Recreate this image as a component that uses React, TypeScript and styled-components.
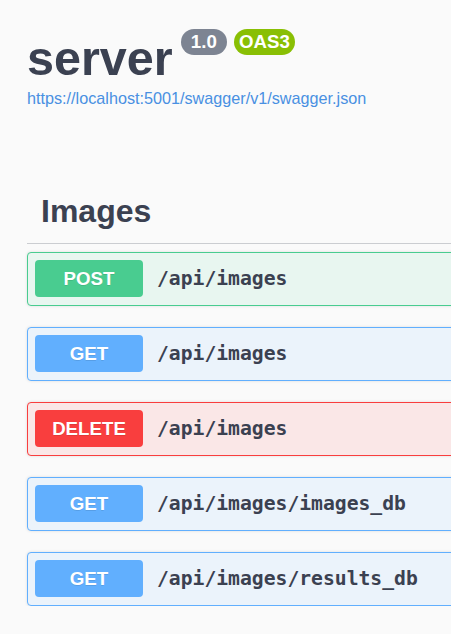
import React from 'react';
import styled, { createGlobalStyle } from 'styled-components';

const GlobalStyle = createGlobalStyle`
  html, body {
    margin: 0;
    padding: 0;
    background: #fafafa;
    overflow: hidden;
  }
  body {
    font-family: 'Liberation Sans', Arial, sans-serif;
    color: #3b4151;
  }
`;

const Viewport = styled.div`
  width: 100vw;
  overflow: hidden;
`;

const Page = styled.div`
  width: 520px;
  padding: 0 0 0 27px;
`;

const Info = styled.div`
  padding-top: 22px;
`;

const TitleRow = styled.div`
  display: flex;
  align-items: flex-start;
  gap: 7px;
`;

const Title = styled.h2`
  margin: 0 1px 0 0;
  font-size: 48.5px;
  font-weight: 700;
  line-height: 72px;
  color: #3b4151;
`;

const Badge = styled.span<{ $bg: string }>`
  margin-top: 7px;
  display: inline-block;
  height: 26px;
  line-height: 26px;
  padding: 0 5px;
  border-radius: 13px;
  background: ${(p) => p.$bg};
  color: #fff;
  font-size: 18.7px;
  font-weight: 700;
  white-space: pre;
`;

const SpecLink = styled.a`
  display: block;
  margin-top: -5px;
  font-size: 16.2px;
  line-height: 18px;
  color: #4990e2;
  text-decoration: none;
`;

const Section = styled.div`
  margin-top: 79px;
`;

const TagHeader = styled.h3`
  margin: 0;
  padding: 0 0 0 14px;
  height: 57px;
  line-height: 50px;
  font-size: 32px;
  font-weight: 700;
  color: #3b4151;
  border-bottom: 1px solid #cbcdd1;
`;

const Ops = styled.div`
  padding-top: 8px;
  display: flex;
  flex-direction: column;
  gap: 21px;
`;

const methodColors: Record<string, { main: string; bg: string }> = {
  POST: { main: '#49cc90', bg: '#e8f6f0' },
  GET: { main: '#61affe', bg: '#ebf3fb' },
  DELETE: { main: '#f93e3e', bg: '#fae7e7' },
};

const OpBlock = styled.div<{ $main: string; $bg: string }>`
  display: flex;
  align-items: center;
  gap: 14px;
  padding: 7px 7px 8px;
  border: 1px solid ${(p) => p.$main};
  border-radius: 4px;
  background: ${(p) => p.$bg};
  box-shadow: 0 0 3px rgba(0, 0, 0, 0.12);
`;

const Method = styled.span<{ $main: string }>`
  width: 108px;
  height: 37px;
  line-height: 37px;
  border-radius: 4px;
  background: ${(p) => p.$main};
  color: #fff;
  text-align: center;
  font-size: 18.7px;
  font-weight: 700;
  text-shadow: 0 1px 0 rgba(0, 0, 0, 0.1);
`;

const Path = styled.span`
  font-family: 'DejaVu Sans Mono', 'Liberation Mono', monospace;
  font-size: 19.7px;
  font-weight: 700;
  color: #3b4151;
`;

const ops = [
  { method: 'POST', path: '/api/images' },
  { method: 'GET', path: '/api/images' },
  { method: 'DELETE', path: '/api/images' },
  { method: 'GET', path: '/api/images/images_db' },
  { method: 'GET', path: '/api/images/results_db' },
];

export default function App() {
  return (
    <>
      <GlobalStyle />
      <Viewport>
        <Page>
          <Info>
            <TitleRow>
              <Title>server</Title>
              <Badge $bg="#7d8492">{' 1.0 '}</Badge>
              <Badge $bg="#89bf04">OAS3</Badge>
            </TitleRow>
            <SpecLink href="#">https://localhost:5001/swagger/v1/swagger.json</SpecLink>
          </Info>
          <Section>
            <TagHeader>Images</TagHeader>
            <Ops>
              {ops.map((op, i) => {
                const c = methodColors[op.method];
                return (
                  <OpBlock key={i} $main={c.main} $bg={c.bg}>
                    <Method $main={c.main}>{op.method}</Method>
                    <Path>{op.path}</Path>
                  </OpBlock>
                );
              })}
            </Ops>
          </Section>
        </Page>
      </Viewport>
    </>
  );
}
